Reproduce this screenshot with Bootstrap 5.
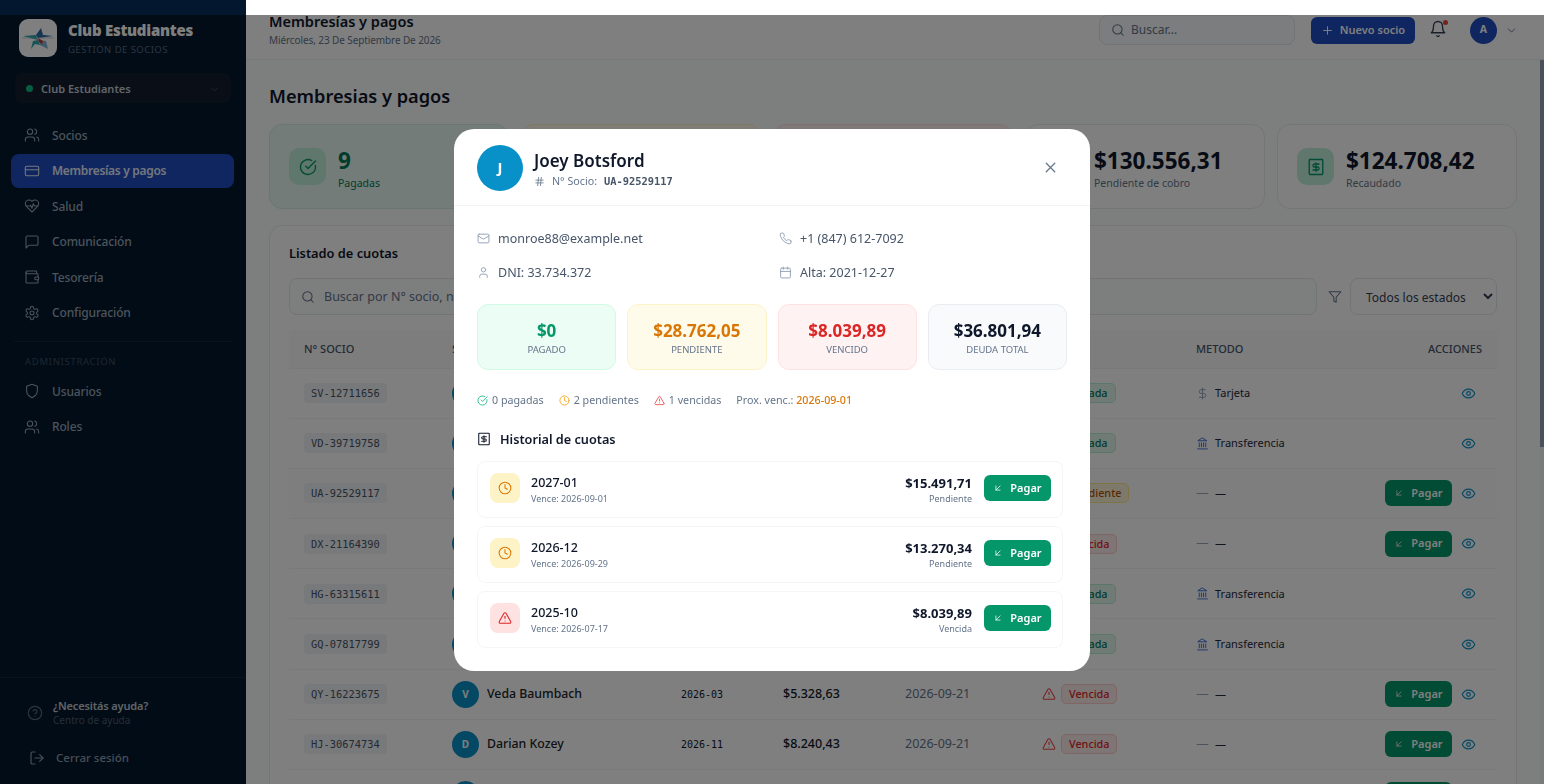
<!DOCTYPE html>
<html lang="es">
<head>
<meta charset="UTF-8">
<meta name="viewport" content="width=device-width, initial-scale=1">
<title>Membresías y pagos</title>
<link href="https://cdn.jsdelivr.net/npm/bootstrap@5.3.0/dist/css/bootstrap.min.css" rel="stylesheet">
<script src="https://cdn.jsdelivr.net/npm/bootstrap@5.3.0/dist/js/bootstrap.bundle.min.js"></script>
<style>
html, body { height: 100%; overflow: hidden; }
body { font-family: "Noto Sans", sans-serif; background: #fbfcfd; color: #0f172a; }
.ic { fill: none; stroke: currentColor; stroke-width: 1.8; stroke-linecap: round; stroke-linejoin: round; flex-shrink: 0; display: block; }
.mono { font-family: "DejaVu Sans Mono", monospace; }

.side { width: 246px; height: 784px; background: #03182e; flex-shrink: 0; }
.brand { padding: 19px 19px 16px; gap: 11px; }
.logo-box { width: 38px; height: 38px; border-radius: 9px; background: #fff; }
.brand-name { font-size: 15px; font-weight: 900; color: #fff; line-height: 20px; margin-top: 1px; letter-spacing: -.25px; }
.brand-sub { font-size: 9.5px; letter-spacing: .45px; color: #5a6c80; line-height: 14px; margin-top: 3px; }
.club-pick { margin: 0 15px; height: 30px; border-radius: 8px; background: #141f2f; color: #c4cbd4; font-size: 11px; font-weight: 600; padding: 2px 11px 0; gap: 8px; }
.club-dot { width: 7px; height: 7px; border-radius: 50%; background: #10b981; margin-top: -2px; }
.side-nav { margin-top: 15px; padding: 0 12px 0 11px; }
.side-link { height: 34px; margin-bottom: 1.5px; padding: 1.5px 13px 0; gap: 12px; border-radius: 8px; color: #9aa7b6; font-size: 12px; letter-spacing: -.15px; font-weight: 500; text-decoration: none; }
.side-link .ic { stroke-width: 1.6; margin-top: -1.5px; }
.side-link.on { background: #1e4cc0; color: #e6edf9; font-weight: 600; letter-spacing: -.3px; }
.side-sep { border-top: 1px solid #12243a; margin: 10px 14px 0; }
.side-label { font-size: 9.5px; letter-spacing: .7px; color: #3d4d60; padding: 13px 25px 6px; line-height: 13px; }
.side-nav.tail { margin-top: 0; }
.side-foot { border-top: 1px solid #12243a; padding: 20px 27px 0; height: 107px; }
.help-t { font-size: 11px; letter-spacing: -.15px; font-weight: 600; color: #c1c8d1; line-height: 15px; margin-left: 2px; }
.help-s { font-size: 10px; color: #4d5d70; line-height: 14px; margin-left: 2px; }
.logout { font-size: 11.5px; font-weight: 500; color: #909dac; gap: 11px; margin-top: 22px; padding-left: 2px; }

.topbar { height: 60px; padding: 0 26px 0 23px; border-bottom: 1px solid #eef0f3; background: #fff; flex-shrink: 0; }
.top-title { font-size: 14.5px; font-weight: 600; line-height: 20px; margin-top: 11px; }
.top-sub { font-size: 10px; letter-spacing: -.1px; color: #64748b; line-height: 15px; margin-top: 2px; }
.top-search { width: 196px; height: 30px; border: 1px solid #e4e7eb; border-radius: 8px; background: #f8fafc; color: #64748b; padding: 0 11px; gap: 6px; font-size: 12px; }
.new-btn { width: 104px; height: 27px; background: #1e4cc0; border-radius: 6px; color: #fff; font-size: 11px; font-weight: 600; gap: 6px; margin-left: 16px; }
.bell-wrap { width: 20px; height: 20px; margin-left: 14px; color: #334155; }
.bell-dot { position: absolute; top: 0; right: 1px; width: 5px; height: 5px; border-radius: 50%; background: #ef4444; }
.me { width: 27px; height: 27px; border-radius: 50%; background: #1e4cc0; color: #fff; font-size: 10.5px; font-weight: 700; margin-left: 21px; }

.work { padding: 0 23px; overflow: hidden; }
.page-h { font-size: 18.2px; font-weight: 600; line-height: 26px; margin: 23px 0 15px; }
.stat-grid { display: grid; grid-template-columns: repeat(5, 240px); gap: 12px; }
.stat-box { height: 85px; border: 1px solid #e8ebef; border-radius: 13px; background: #fff; padding: 0 19px; gap: 12px; }
.stat-box.paid { background: #e7f8f1; border-color: #d2efe3; }
.stat-box.pend { background: #fffbeb; border-color: #fdf0c4; }
.stat-box.late { background: #fef2f2; border-color: #fde0e0; }
.stat-ico { width: 37px; height: 37px; border-radius: 10px; background: #bfeedb; color: #059669; }
.stat-val { font-size: 22.5px; font-weight: 700; line-height: 28px; margin-top: 4.5px; }
.stat-lab { font-size: 10.5px; color: #64748b; line-height: 15px; margin-top: 1.5px; }
.paid .stat-val, .paid .stat-lab { color: #047857; }

.list-box { border: 1px solid #e8ebef; border-radius: 13px; background: #fff; margin-top: 16px; padding: 18px 19px; height: 700px; }
.list-h { font-size: 12.8px; font-weight: 600; line-height: 18px; margin-bottom: 16px; }
.list-search { height: 37px; border: 1px solid #e4e7eb; border-radius: 8px; background: #fbfcfd; color: #64748b; padding: 1px 11px 0; gap: 9px; font-size: 12.5px; }
.filter-ic { width: 33px; padding-left: 3px; color: #64748b; }
.state-sel { width: 147px; height: 37px; border: 1px solid #e4e7eb; border-radius: 8px; background: #fff; color: #334155; font-size: 12px; padding: 1px 0 0 11px; }

.fee-table { table-layout: fixed; width: 1208px; margin: 15px 0 0; --bs-table-bg: transparent; --bs-table-border-color: #f1f3f5; }
.fee-table th { height: 38px; padding: 0 15px; vertical-align: middle; background: #fafbfc; font-size: 11px; font-weight: 500; color: #475569; border-bottom: 1px solid #f1f3f5; }
.fee-table td { height: 50.2px; padding: 0 15px; vertical-align: middle; font-size: 11px; }
.fee-table tr.hl td { background: #fcfdfd; }
.c1 { width: 148px; } .c2 { width: 229px; } .c3 { width: 102px; } .c4 { width: 122px; } .c5 { width: 137px; } .c6 { width: 154px; }
.code-tag { display: inline-block; background: #f1f3f5; color: #475569; font-size: 10.4px; line-height: 20px; padding: 0 7px; border-radius: 4px; }
.av-sm { width: 27px; height: 27px; border-radius: 50%; background: #0891c8; color: #fff; font-size: 10px; font-weight: 700; flex-shrink: 0; }
.who { font-size: 12.3px; font-weight: 500; margin-left: 8px; }
.per { font-size: 10px; font-weight: 400; color: #0f172a; }
.amt { font-size: 12.5px; font-weight: 500; color: #0f172a; }
.due { font-size: 12.5px; color: #64748b; }
.state { gap: 5px; }
.state-tag { font-size: 10.8px; font-weight: 500; line-height: 18px; padding: 0 7px; border-radius: 5px; border: 1px solid; }
.st-ok { color: #047857; background: #e3f6ec; border-color: #b6ecd6; }
.st-pe { color: #b45309; background: #fdf5d6; border-color: #fde68a; }
.st-la { color: #dc2626; background: #fdeaea; border-color: #fecaca; }
.ico-ok { color: #10b981; } .ico-pe { color: #f59e0b; } .ico-la { color: #ef4444; }
.pay-tb { width: 67px; height: 26px; background: #059669; border-radius: 6px; color: #fff; font-size: 11px; font-weight: 600; gap: 7px; }
.eye { color: #0891c8; margin: 0 6px 0 9px; }
.way { gap: 6px; color: #1e293b; }

.scroll-track { width: 4px; background: #f1f5f9; flex-shrink: 0; }
.scroll-thumb { height: 387px; background: #94a3b8; }

.dim { top: 15px; height: 769px; width: 100%; opacity: .5 !important; }
.modal.pop { top: 15px; height: 769px; overflow: hidden; }
.pop-box { width: 636px; height: 542px; border: 0; border-radius: 20px; overflow: hidden; }
.pop-head { height: 77px; padding: 16px 23px 0; gap: 11px; border-bottom: 1px solid #f1f3f5; }
.av-lg { width: 46px; height: 46px; border-radius: 50%; background: #0891c8; color: #fff; font-size: 15px; font-weight: 700; }
.pop-name { font-size: 17px; font-weight: 600; line-height: 22px; margin-top: 5px; }
.pop-num { font-size: 10.7px; color: #64748b; gap: 7px; line-height: 15px; margin-top: 2px; }
.pop-num .mono { font-size: 10.4px; font-weight: 700; color: #475569; }
.pop-x { color: #64748b; margin: 14px 8px 0 0; }
.pop-body { padding: 24px 23px 0; }
.info-grid { display: grid; grid-template-columns: 288px 288px; column-gap: 14px; row-gap: 16px; color: #475569; font-size: 12.5px; line-height: 18px; }
.info-i { gap: 8px; }
.info-i svg { color: #94a3b8; }
.sum-grid { display: grid; grid-template-columns: repeat(4, 139.25px); gap: 11px; margin-top: 22px; }
.sum-box { height: 66px; border: 1px solid; border-radius: 11px; text-align: center; padding-top: 14px; }
.sum-val { font-size: 17px; font-weight: 700; line-height: 24px; }
.sum-lab { font-size: 9.5px; color: #64748b; line-height: 14px; }
.sb-ok { background: #ecfdf5; border-color: #d1fae5; } .sb-ok .sum-val { color: #059669; }
.sb-pe { background: #fffbeb; border-color: #fef3c7; } .sb-pe .sum-val { color: #d97706; }
.sb-la { background: #fef2f2; border-color: #fee2e2; } .sb-la .sum-val { color: #dc2626; }
.sb-all { background: #f8fafc; border-color: #e9edf2; } .sb-all .sum-val { color: #0f172a; }
.mini-line { font-size: 10.7px; color: #64748b; margin-top: 23px; height: 15px; gap: 15px; }
.mini-i { gap: 4px; }
.mini-d { color: #d97706; font-weight: 500; }
.hist-h { font-size: 12.7px; font-weight: 600; gap: 9px; margin-top: 22px; line-height: 18px; }
.hist-list { width: 586px; margin-top: 13px; }
.hist-row { height: 57px; border: 1px solid #f4f5f7; border-radius: 8px; padding: 0 11px 0 12px; margin-bottom: 8px; gap: 11px; }
.hist-ic { width: 30px; height: 30px; border-radius: 8px; margin-top: -2px; }
.hi-pe { background: #fef3c7; color: #d97706; }
.hi-la { background: #fee2e2; color: #dc2626; }
.hist-per { font-size: 12.5px; font-weight: 500; line-height: 16px; margin-top: 1px; }
.hist-due { font-size: 9px; color: #64748b; line-height: 13px; margin-top: 1px; }
.hist-val { margin-right: 1px; }
.hist-amt { font-size: 13px; font-weight: 700; line-height: 16px; margin-top: 1px; }
.hist-st { font-size: 9px; color: #64748b; line-height: 13px; margin-top: 1px; }
.pay-pop { width: 67px; height: 26px; background: #059669; border-radius: 6px; color: #fff; font-size: 11px; font-weight: 600; gap: 7px; margin-top: -2px; }
</style>
</head>
<body>
<svg width="0" height="0" class="position-absolute">
  <symbol id="i-users" viewBox="0 0 24 24"><path d="M16 21v-2a4 4 0 0 0-4-4H6a4 4 0 0 0-4 4v2"/><circle cx="9" cy="7" r="4"/><path d="M22 21v-2a4 4 0 0 0-3-3.87"/><path d="M16 3.13a4 4 0 0 1 0 7.75"/></symbol>
  <symbol id="i-card" viewBox="0 0 24 24"><rect x="2" y="5" width="20" height="14" rx="2"/><line x1="2" y1="10" x2="22" y2="10"/></symbol>
  <symbol id="i-heart" viewBox="0 0 24 24"><path d="M19 14c1.49-1.46 3-3.21 3-5.5A5.5 5.5 0 0 0 16.5 3c-1.76 0-3 .5-4.5 2-1.5-1.5-2.74-2-4.5-2A5.5 5.5 0 0 0 2 8.5c0 2.3 1.5 4.05 3 5.5l7 7Z"/><path d="M3.22 12H9.5l.5-1 2 4.5 2-7 1.5 3.5h5.27"/></symbol>
  <symbol id="i-msg" viewBox="0 0 24 24"><path d="M21 15a2 2 0 0 1-2 2H7l-4 4V5a2 2 0 0 1 2-2h14a2 2 0 0 1 2 2z"/></symbol>
  <symbol id="i-wallet" viewBox="0 0 24 24"><path d="M19 7V4a1 1 0 0 0-1-1H5a2 2 0 0 0 0 4h15a1 1 0 0 1 1 1v4h-3a2 2 0 0 0 0 4h3a1 1 0 0 0 1-1v-2a1 1 0 0 0-1-1"/><path d="M3 5v14a2 2 0 0 0 2 2h15a1 1 0 0 0 1-1v-4"/></symbol>
  <symbol id="i-gear" viewBox="0 0 24 24"><path d="M12.22 2h-.44a2 2 0 0 0-2 2v.18a2 2 0 0 1-1 1.73l-.43.25a2 2 0 0 1-2 0l-.15-.08a2 2 0 0 0-2.73.73l-.22.38a2 2 0 0 0 .73 2.73l.15.1a2 2 0 0 1 1 1.72v.51a2 2 0 0 1-1 1.74l-.15.09a2 2 0 0 0-.73 2.73l.22.38a2 2 0 0 0 2.73.73l.15-.08a2 2 0 0 1 2 0l.43.25a2 2 0 0 1 1 1.73V20a2 2 0 0 0 2 2h.44a2 2 0 0 0 2-2v-.18a2 2 0 0 1 1-1.73l.43-.25a2 2 0 0 1 2 0l.15.08a2 2 0 0 0 2.73-.73l.22-.39a2 2 0 0 0-.73-2.73l-.15-.08a2 2 0 0 1-1-1.74v-.5a2 2 0 0 1 1-1.74l.15-.09a2 2 0 0 0 .73-2.73l-.22-.38a2 2 0 0 0-2.73-.73l-.15.08a2 2 0 0 1-2 0l-.43-.25a2 2 0 0 1-1-1.73V4a2 2 0 0 0-2-2z"/><circle cx="12" cy="12" r="3"/></symbol>
  <symbol id="i-shield" viewBox="0 0 24 24"><path d="M12 22s8-4 8-10V5l-8-3-8 3v7c0 6 8 10 8 10"/></symbol>
  <symbol id="i-help" viewBox="0 0 24 24"><circle cx="12" cy="12" r="10"/><path d="M9.09 9a3 3 0 0 1 5.83 1c0 2-3 3-3 3"/><path d="M12 17h.01"/></symbol>
  <symbol id="i-out" viewBox="0 0 24 24"><path d="M9 21H5a2 2 0 0 1-2-2V5a2 2 0 0 1 2-2h4"/><polyline points="16 17 21 12 16 7"/><line x1="21" y1="12" x2="9" y2="12"/></symbol>
  <symbol id="i-search" viewBox="0 0 24 24"><circle cx="11" cy="11" r="8"/><path d="m21 21-4.3-4.3"/></symbol>
  <symbol id="i-plus" viewBox="0 0 24 24"><path d="M5 12h14"/><path d="M12 5v14"/></symbol>
  <symbol id="i-bell" viewBox="0 0 24 24"><path d="M6 8a6 6 0 0 1 12 0c0 7 3 9 3 9H3s3-2 3-9"/><path d="M10.3 21a1.94 1.94 0 0 0 3.4 0"/></symbol>
  <symbol id="i-down" viewBox="0 0 24 24"><path d="m6 9 6 6 6-6"/></symbol>
  <symbol id="i-check" viewBox="0 0 24 24"><path d="M21.801 10A10 10 0 1 1 17 3.335"/><path d="m9 11 3 3L22 4"/></symbol>
  <symbol id="i-receipt" viewBox="0 0 24 24"><rect x="3" y="2" width="18" height="20" rx="1"/><path d="M16 8h-6a2 2 0 1 0 0 4h4a2 2 0 1 1 0 4H8"/><path d="M12 17.5v-11"/></symbol>
  <symbol id="i-funnel" viewBox="0 0 24 24"><path d="M22 3H2l8 9.46V19l4 2v-8.54L22 3z"/></symbol>
  <symbol id="i-eye" viewBox="0 0 24 24"><path d="M2 12s3-7 10-7 10 7 10 7-3 7-10 7-10-7-10-7Z"/><circle cx="12" cy="12" r="3"/></symbol>
  <symbol id="i-dollar" viewBox="0 0 24 24"><line x1="12" y1="2" x2="12" y2="22"/><path d="M17 5H9.5a3.5 3.5 0 0 0 0 7h5a3.5 3.5 0 0 1 0 7H6"/></symbol>
  <symbol id="i-bank" viewBox="0 0 24 24"><line x1="3" y1="22" x2="21" y2="22"/><line x1="6" y1="18" x2="6" y2="11"/><line x1="10" y1="18" x2="10" y2="11"/><line x1="14" y1="18" x2="14" y2="11"/><line x1="18" y1="18" x2="18" y2="11"/><polygon points="12 2 20 7 4 7"/></symbol>
  <symbol id="i-pay" viewBox="0 0 24 24"><path d="M17 7 7 17"/><path d="M17 17H7V7"/></symbol>
  <symbol id="i-warn" viewBox="0 0 24 24"><path d="m21.73 18-8-14a2 2 0 0 0-3.48 0l-8 14A2 2 0 0 0 4 21h16a2 2 0 0 0 1.73-3"/><path d="M12 9v4"/><path d="M12 17h.01"/></symbol>
  <symbol id="i-clock" viewBox="0 0 24 24"><circle cx="12" cy="12" r="10"/><polyline points="12 6 12 12 16 14"/></symbol>
  <symbol id="i-mail" viewBox="0 0 24 24"><rect x="2" y="4" width="20" height="16" rx="2"/><path d="m22 7-8.97 5.7a1.94 1.94 0 0 1-2.06 0L2 7"/></symbol>
  <symbol id="i-phone" viewBox="0 0 24 24"><path d="M22 16.92v3a2 2 0 0 1-2.18 2 19.79 19.79 0 0 1-8.63-3.07 19.5 19.5 0 0 1-6-6 19.79 19.79 0 0 1-3.07-8.67A2 2 0 0 1 4.11 2h3a2 2 0 0 1 2 1.72 12.84 12.84 0 0 0 .7 2.81 2 2 0 0 1-.45 2.11L8.09 9.91a16 16 0 0 0 6 6l1.27-1.27a2 2 0 0 1 2.11-.45 12.84 12.84 0 0 0 2.81.7A2 2 0 0 1 22 16.92z"/></symbol>
  <symbol id="i-user" viewBox="0 0 24 24"><path d="M19 21v-2a4 4 0 0 0-4-4H9a4 4 0 0 0-4 4v2"/><circle cx="12" cy="7" r="4"/></symbol>
  <symbol id="i-cal" viewBox="0 0 24 24"><rect x="3" y="4" width="18" height="18" rx="2"/><path d="M16 2v4"/><path d="M8 2v4"/><path d="M3 10h18"/></symbol>
  <symbol id="i-hash" viewBox="0 0 24 24"><line x1="4" y1="9" x2="20" y2="9"/><line x1="4" y1="15" x2="20" y2="15"/><line x1="10" y1="3" x2="8" y2="21"/><line x1="16" y1="3" x2="14" y2="21"/></symbol>
  <symbol id="i-x" viewBox="0 0 24 24"><path d="M18 6 6 18"/><path d="m6 6 12 12"/></symbol>
  <symbol id="i-minus" viewBox="0 0 24 24"><path d="M2 12h20"/></symbol>
</svg>

<div class="d-flex">
  <!-- Sidebar -->
  <aside class="side d-flex flex-column">
    <div class="brand d-flex align-items-center">
      <div class="logo-box">
        <svg width="38" height="38" viewBox="0 0 38 38">
          <polygon points="4,17 17,16 19,21 14,22 12,30 16,25 21,26 19,21" fill="#2fa9ad"/>
          <polygon points="22,9 24,16 34,17 19,19 17,16" fill="#2a6aa6"/>
          <polygon points="19,21 27,22 29,30 21,26" fill="#7fb0d8"/>
          <polygon points="19,19 24,22 23,25 20,23" fill="#c0392b"/>
          <line x1="3" y1="19" x2="35" y2="19" stroke="#8aa3b8" stroke-width=".5"/>
        </svg>
      </div>
      <div>
        <div class="brand-name">Club Estudiantes</div>
        <div class="brand-sub">GESTIÓN DE SOCIOS</div>
      </div>
    </div>
    <div class="club-pick d-flex align-items-center">
      <span class="club-dot"></span><span class="flex-grow-1">Club Estudiantes</span>
      <svg class="ic" width="11" height="11" style="color:#4c5a6b"><use href="#i-down"/></svg>
    </div>
    <nav class="side-nav">
      <a class="side-link d-flex align-items-center" href="#"><svg class="ic" width="16" height="16"><use href="#i-users"/></svg>Socios</a>
      <a class="side-link on d-flex align-items-center" href="#"><svg class="ic" width="16" height="16"><use href="#i-card"/></svg>Membresías y pagos</a>
      <a class="side-link d-flex align-items-center" href="#"><svg class="ic" width="16" height="16"><use href="#i-heart"/></svg>Salud</a>
      <a class="side-link d-flex align-items-center" href="#"><svg class="ic" width="16" height="16"><use href="#i-msg"/></svg>Comunicación</a>
      <a class="side-link d-flex align-items-center" href="#"><svg class="ic" width="16" height="16"><use href="#i-wallet"/></svg>Tesorería</a>
      <a class="side-link d-flex align-items-center" href="#"><svg class="ic" width="16" height="16"><use href="#i-gear"/></svg>Configuración</a>
    </nav>
    <div class="side-sep"></div>
    <div class="side-label">ADMINISTRACIÓN</div>
    <nav class="side-nav tail">
      <a class="side-link d-flex align-items-center" href="#"><svg class="ic" width="16" height="16"><use href="#i-shield"/></svg>Usuarios</a>
      <a class="side-link d-flex align-items-center" href="#"><svg class="ic" width="16" height="16"><use href="#i-users"/></svg>Roles</a>
    </nav>
    <div class="side-foot mt-auto">
      <div class="d-flex align-items-center gap-2">
        <svg class="ic" width="16" height="16" style="color:#5c6a7a"><use href="#i-help"/></svg>
        <div><div class="help-t">¿Necesitás ayuda?</div><div class="help-s">Centro de ayuda</div></div>
      </div>
      <div class="logout d-flex align-items-center"><svg class="ic" width="16" height="16"><use href="#i-out"/></svg>Cerrar sesión</div>
    </div>
  </aside>

  <!-- Main -->
  <div class="flex-grow-1 d-flex flex-column overflow-hidden" style="height:784px">
    <header class="topbar d-flex align-items-start">
      <div class="flex-grow-1">
        <div class="top-title">Membresías y pagos</div>
        <div class="top-sub">Miércoles, 23 De Septiembre De 2026</div>
      </div>
      <div class="d-flex align-items-center" style="height:60px">
        <div class="top-search d-flex align-items-center"><svg class="ic" width="14" height="14"><use href="#i-search"/></svg>Buscar...</div>
        <div class="new-btn d-flex align-items-center justify-content-center"><svg class="ic" width="13" height="13"><use href="#i-plus"/></svg>Nuevo socio</div>
        <div class="bell-wrap position-relative"><svg class="ic" width="18" height="18"><use href="#i-bell"/></svg><span class="bell-dot"></span></div>
        <div class="me d-flex align-items-center justify-content-center">A</div>
        <svg class="ic ms-2" width="13" height="13" style="color:#64748b"><use href="#i-down"/></svg>
      </div>
    </header>
    <div class="d-flex flex-grow-1 overflow-hidden">
      <main class="work flex-grow-1">
        <h1 class="page-h">Membresias y pagos</h1>
        <div class="stat-grid">
          <div class="stat-box paid d-flex align-items-center">
            <div class="stat-ico d-flex align-items-center justify-content-center"><svg class="ic" width="18" height="18"><use href="#i-check"/></svg></div>
            <div><div class="stat-val">9</div><div class="stat-lab">Pagadas</div></div>
          </div>
          <div class="stat-box pend"></div>
          <div class="stat-box late"></div>
          <div class="stat-box d-flex align-items-center">
            <div class="stat-ico"></div>
            <div><div class="stat-val">$130.556,31</div><div class="stat-lab">Pendiente de cobro</div></div>
          </div>
          <div class="stat-box d-flex align-items-center">
            <div class="stat-ico d-flex align-items-center justify-content-center"><svg class="ic" width="18" height="18"><use href="#i-receipt"/></svg></div>
            <div><div class="stat-val">$124.708,42</div><div class="stat-lab">Recaudado</div></div>
          </div>
        </div>
        <section class="list-box">
          <div class="list-h">Listado de cuotas</div>
          <div class="d-flex align-items-center">
            <div class="list-search flex-grow-1 d-flex align-items-center"><svg class="ic" width="14" height="14"><use href="#i-search"/></svg>Buscar por N° socio, n</div>
            <div class="filter-ic d-flex justify-content-center"><svg class="ic" width="14" height="14"><use href="#i-funnel"/></svg></div>
            <select class="state-sel"><option>Todos los estados</option></select>
          </div>
          <table class="table fee-table">
            <thead>
              <tr>
                <th class="c1">N° SOCIO</th><th class="c2">SOCIO</th><th class="c3"></th><th class="c4"></th><th class="c5"></th><th class="c6"></th><th>METODO</th><th class="text-end">ACCIONES</th>
              </tr>
            </thead>
            <tbody id="filas"></tbody>
          </table>
        </section>
      </main>
      <div class="scroll-track"><div class="scroll-thumb"></div></div>
    </div>
  </div>
</div>

<!-- Modal -->
<div class="modal-backdrop show dim"></div>
<div class="modal pop d-flex align-items-center justify-content-center">
  <div class="modal-content pop-box">
    <div class="pop-head d-flex align-items-start">
      <div class="av-lg d-flex align-items-center justify-content-center">J</div>
      <div class="flex-grow-1">
        <div class="pop-name">Joey Botsford</div>
        <div class="pop-num d-flex align-items-center"><svg class="ic" width="11" height="11"><use href="#i-hash"/></svg><span>N° Socio:</span><span class="mono">UA-92529117</span></div>
      </div>
      <svg class="ic pop-x" width="17" height="17"><use href="#i-x"/></svg>
    </div>
    <div class="pop-body">
      <div class="info-grid">
        <div class="info-i d-flex align-items-center"><svg class="ic" width="13" height="13"><use href="#i-mail"/></svg>monroe88@example.net</div>
        <div class="info-i d-flex align-items-center"><svg class="ic" width="13" height="13"><use href="#i-phone"/></svg>+1 (847) 612-7092</div>
        <div class="info-i d-flex align-items-center"><svg class="ic" width="13" height="13"><use href="#i-user"/></svg>DNI: 33.734.372</div>
        <div class="info-i d-flex align-items-center"><svg class="ic" width="13" height="13"><use href="#i-cal"/></svg>Alta: 2021-12-27</div>
      </div>
      <div class="sum-grid">
        <div class="sum-box sb-ok"><div class="sum-val">$0</div><div class="sum-lab">PAGADO</div></div>
        <div class="sum-box sb-pe"><div class="sum-val">$28.762,05</div><div class="sum-lab">PENDIENTE</div></div>
        <div class="sum-box sb-la"><div class="sum-val">$8.039,89</div><div class="sum-lab">VENCIDO</div></div>
        <div class="sum-box sb-all"><div class="sum-val">$36.801,94</div><div class="sum-lab">DEUDA TOTAL</div></div>
      </div>
      <div class="mini-line d-flex align-items-center">
        <span class="mini-i d-flex align-items-center"><svg class="ic ico-ok" width="11" height="11"><use href="#i-check"/></svg>0 pagadas</span>
        <span class="mini-i d-flex align-items-center"><svg class="ic ico-pe" width="11" height="11"><use href="#i-clock"/></svg>2 pendientes</span>
        <span class="mini-i d-flex align-items-center"><svg class="ic ico-la" width="11" height="11"><use href="#i-warn"/></svg>1 vencidas</span>
        <span>Prox. venc.: <span class="mini-d">2026-09-01</span></span>
      </div>
      <div class="hist-h d-flex align-items-center"><svg class="ic" width="14" height="14"><use href="#i-receipt"/></svg>Historial de cuotas</div>
      <div class="hist-list" id="historial"></div>
    </div>
  </div>
</div>

<script>
const use = (id, w, cls = "") => `<svg class="ic ${cls}" width="${w}" height="${w}"><use href="#${id}"/></svg>`;

const estados = {
  ok: ["Pagada", "st-ok", "i-check", "ico-ok"],
  pe: ["Pendiente", "st-pe", "i-clock", "ico-pe"],
  la: ["Vencida", "st-la", "i-warn", "ico-la"]
};
// filas tapadas por el modal van sin nombre ni importes
const filas = [
  { cod: "SV-12711656", est: "ok", met: "t" },
  { cod: "VD-39719758", est: "ok", met: "b" },
  { cod: "UA-92529117", est: "pe", hl: 1 },
  { cod: "DX-21164390", est: "la" },
  { cod: "HG-63315611", est: "ok", met: "b" },
  { cod: "GQ-07817799", est: "ok", met: "b" },
  { cod: "QY-16223675", est: "la", ini: "V", nom: "Veda Baumbach", per: "2026-03", amt: "$5.328,63", due: "2026-09-21" },
  { cod: "HJ-30674734", est: "la", ini: "D", nom: "Darian Kozey", per: "2026-11", amt: "$8.240,43", due: "2026-09-21" },
  { cod: "", est: "pe" }
];
document.getElementById("filas").innerHTML = filas.map(f => {
  const e = estados[f.est];
  let met = `<span class="way d-flex align-items-center"><svg class="ic" width="13" height="13" style="color:#94a3b8"><use href="#i-minus"/></svg>—</span>`;
  if (f.met === "t") met = `<span class="way d-flex align-items-center"><svg class="ic" width="13" height="13" style="color:#94a3b8"><use href="#i-dollar"/></svg>Tarjeta</span>`;
  if (f.met === "b") met = `<span class="way d-flex align-items-center"><svg class="ic" width="13" height="13" style="color:#3b6fd8"><use href="#i-bank"/></svg>Transferencia</span>`;
  const pagar = f.est === "ok" ? "" : `<span class="pay-tb d-flex align-items-center justify-content-center">${use("i-pay", 10)}Pagar</span>`;
  return `<tr class="${f.hl ? "hl" : ""}">
    <td><span class="code-tag mono">${f.cod}</span></td>
    <td><div class="d-flex align-items-center"><span class="av-sm d-flex align-items-center justify-content-center">${f.ini || ""}</span><span class="who">${f.nom || ""}</span></div></td>
    <td><span class="per mono">${f.per || ""}</span></td>
    <td><span class="amt">${f.amt || ""}</span></td>
    <td><span class="due">${f.due || ""}</span></td>
    <td><div class="state d-flex align-items-center">${use(e[2], 14, e[3])}<span class="state-tag ${e[1]}">${e[0]}</span></div></td>
    <td>${met}</td>
    <td><div class="d-flex align-items-center justify-content-end">${pagar}<svg class="ic eye" width="15" height="15"><use href="#i-eye"/></svg></div></td>
  </tr>`;
}).join("");

const cuotas = [
  { per: "2027-01", due: "2026-09-01", amt: "$15.491,71", est: "Pendiente" },
  { per: "2026-12", due: "2026-09-29", amt: "$13.270,34", est: "Pendiente" },
  { per: "2025-10", due: "2026-07-17", amt: "$8.039,89", est: "Vencida" }
];
document.getElementById("historial").innerHTML = cuotas.map(c => `
  <div class="hist-row d-flex align-items-center">
    <div class="hist-ic ${c.est === "Vencida" ? "hi-la" : "hi-pe"} d-flex align-items-center justify-content-center">${use(c.est === "Vencida" ? "i-warn" : "i-clock", 14)}</div>
    <div class="flex-grow-1"><div class="hist-per">${c.per}</div><div class="hist-due">Vence: ${c.due}</div></div>
    <div class="hist-val text-end"><div class="hist-amt">${c.amt}</div><div class="hist-st">${c.est}</div></div>
    <div class="pay-pop d-flex align-items-center justify-content-center">${use("i-pay", 10)}Pagar</div>
  </div>`).join("");
</script>
</body>
</html>
